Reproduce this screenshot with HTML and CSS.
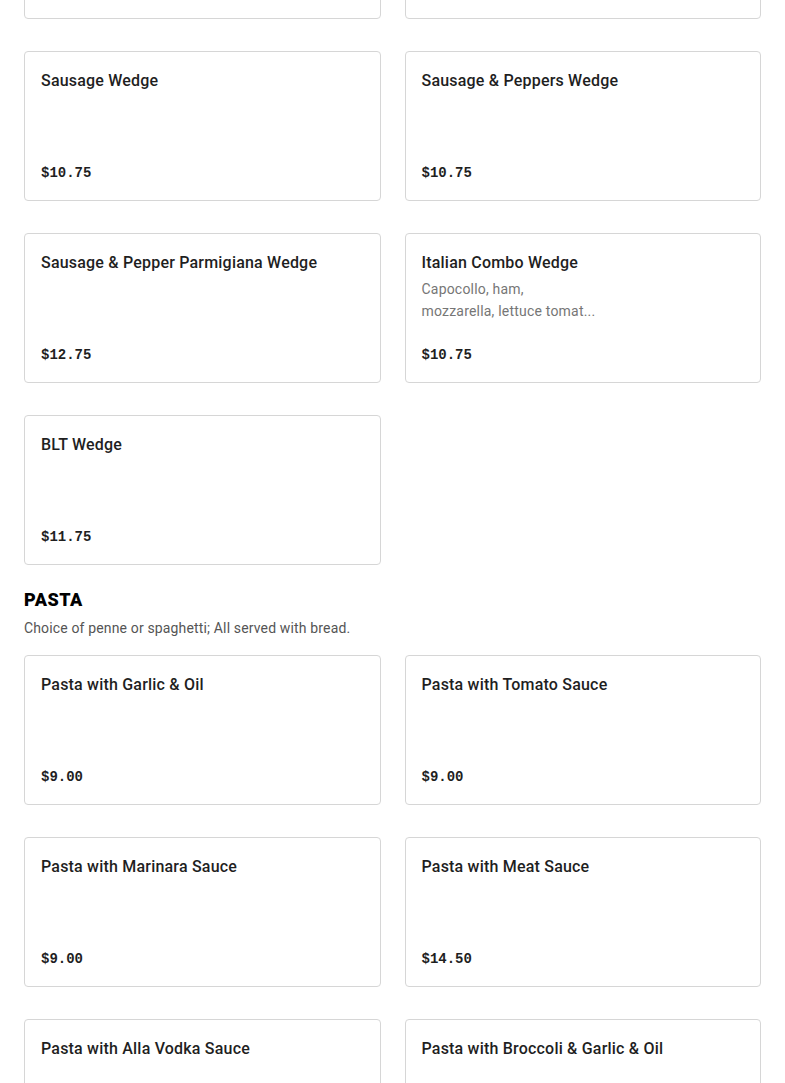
FILE: index.html
```html
<!DOCTYPE html>
<html lang="en">
<head>
<meta charset="utf-8">
<title>Menu</title>
<link rel="stylesheet" href="styles.css">
</head>
<body>
<main class="menu">
  <section class="section">
    <div class="grid">
      <article class="card"></article>
      <article class="card"></article>
      <article class="card"><h3 class="title">Sausage Wedge</h3><div class="price">$10.75</div></article>
      <article class="card"><h3 class="title">Sausage &amp; Peppers Wedge</h3><div class="price">$10.75</div></article>
      <article class="card"><h3 class="title">Sausage &amp; Pepper Parmigiana Wedge</h3><div class="price">$12.75</div></article>
      <article class="card"><h3 class="title">Italian Combo Wedge</h3><p class="desc">Capocollo, ham,<br>mozzarella, lettuce tomat...</p><div class="price">$10.75</div></article>
      <article class="card"><h3 class="title">BLT Wedge</h3><div class="price">$11.75</div></article>
    </div>
  </section>
  <section class="section">
    <h2 class="section-title">PASTA</h2>
    <p class="section-sub">Choice of penne or spaghetti; All served with bread.</p>
    <div class="grid">
      <article class="card"><h3 class="title">Pasta with Garlic &amp; Oil</h3><div class="price">$9.00</div></article>
      <article class="card"><h3 class="title">Pasta with Tomato Sauce</h3><div class="price">$9.00</div></article>
      <article class="card"><h3 class="title">Pasta with Marinara Sauce</h3><div class="price">$9.00</div></article>
      <article class="card"><h3 class="title">Pasta with Meat Sauce</h3><div class="price">$14.50</div></article>
      <article class="card"><h3 class="title">Pasta with Alla Vodka Sauce</h3><div class="price">$12.00</div></article>
      <article class="card"><h3 class="title">Pasta with Broccoli &amp; Garlic &amp; Oil</h3><div class="price">$12.00</div></article>
    </div>
  </section>
</main>
</body>
</html>
```
FILE: styles.css
```css
* { box-sizing: border-box; }
html, body { margin: 0; padding: 0; background: #fff; }
body {
  font-family: Roboto, "Noto Sans", "Liberation Sans", sans-serif;
  color: #1f1f1f;
  overflow: hidden;
}
.menu {
  padding: 0 24px;
  margin-top: -131px;
}
.section + .section { margin-top: 23px; }
.grid {
  display: grid;
  grid-template-columns: 1fr 1fr;
  column-gap: 24px;
  row-gap: 32px;
}
.card {
  height: 150px;
  border: 1px solid #d6d6d6;
  border-radius: 4px;
  padding: 17px 16px 15px 16px;
  display: flex;
  flex-direction: column;
}
.title {
  margin: 0;
  font-size: 16px;
  line-height: 24px;
  font-weight: 500;
  letter-spacing: 0.2px;
  color: #1f1f1f;
}
.desc {
  margin: 3px 0 0;
  font-size: 14px;
  line-height: 22px;
  letter-spacing: 0.2px;
  color: #767676;
  white-space: nowrap;
}
.price {
  margin-top: auto;
  font-family: "Liberation Mono", "DejaVu Sans Mono", monospace;
  font-weight: 700;
  font-size: 14px;
  line-height: 24px;
  color: #1f1f1f;
}
.section-title {
  margin: 0;
  font-size: 18px;
  line-height: 24px;
  font-weight: 900;
  letter-spacing: 0.5px;
  color: #000;
}
.section-sub {
  margin: 6px 0 17px;
  font-size: 14px;
  line-height: 20px;
  letter-spacing: 0.15px;
  color: #555;
}
```
